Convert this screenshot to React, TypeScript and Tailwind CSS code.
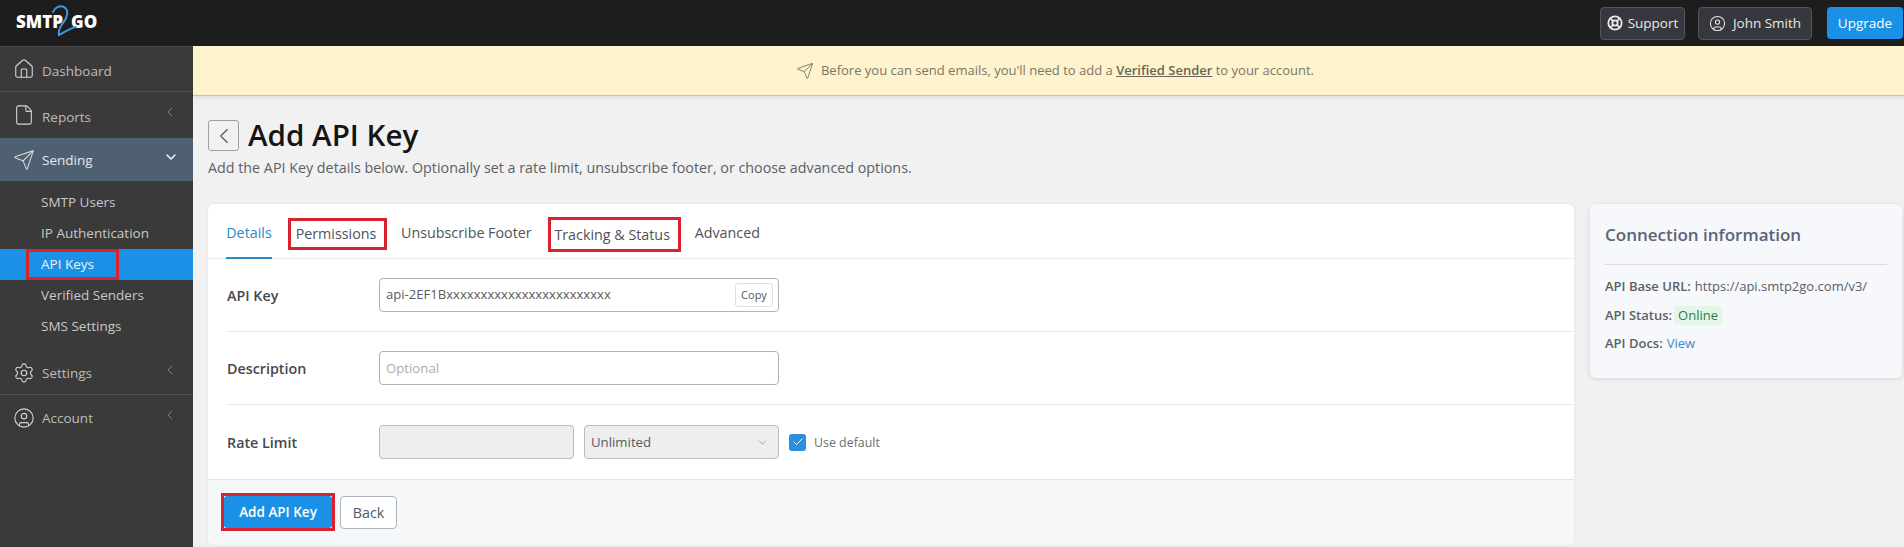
import { Check, ChevronDown, ChevronLeft, CircleUser, File, House, LifeBuoy, Send, Settings } from "lucide-react";

const font = { fontFamily: '"Open Sans", sans-serif' };

const SideItem = ({ icon: Icon, label, chevron, active, low }: { icon: React.ElementType; label: string; chevron?: boolean; active?: boolean; low?: boolean }) => (
  <div className={`flex items-center h-full pl-[13px] pr-[15px] ${active ? "bg-[#4f6073] text-[#e8e8e8]" : "text-[#bdbdbd]"}`}>
    <Icon size={22} strokeWidth={1.2} className="text-[#d4d4d4] shrink-0" />
    <span className={`ml-[7px] text-[13.5px] flex-1 ${low ? "pt-[4px]" : "pt-[1px]"}`}>{label}</span>
    {chevron && <ChevronLeft size={16} strokeWidth={1.25} className="text-[#8f8f8f] -mt-[6px]" />}
    {active && <ChevronDown size={16} strokeWidth={2} className="text-white -mt-[6px] -mr-[1px]" />}
  </div>
);

const subItems = ["SMTP Users", "IP Authentication", "API Keys", "Verified Senders", "SMS Settings"];

const Sidebar = () => (
  <aside className="w-[193px] shrink-0 bg-[#3a3a3a] border-t border-[#4a4a4a]">
    <div className="h-[45px] border-b border-[#4e4e4e]">
      <SideItem icon={House} label="Dashboard" low />
    </div>
    <div className="h-[46px]">
      <SideItem icon={File} label="Reports" chevron low />
    </div>
    <div className="h-[43px]">
      <SideItem icon={Send} label="Sending" active />
    </div>
    <div className="pt-[6px] pb-[10px]">
      {subItems.map((item) => (
        <div key={item} className={`h-[31px] flex items-center text-[13.5px] ${item === "API Keys" ? "bg-[#1a91e6] text-[#f2f2f2]" : "text-[#c8c8c8]"}`}>
          {item === "API Keys" ? (
            <span className="ml-[26px] w-[93px] h-[31px] pl-[12px] flex items-center border-[3px] border-[#d8222f]">{item}</span>
          ) : (
            <span className="ml-[41px]">{item}</span>
          )}
        </div>
      ))}
    </div>
    <div className="h-[43px] border-b border-[#525252]">
      <SideItem icon={Settings} label="Settings" chevron />
    </div>
    <div className="h-[45px]">
      <SideItem icon={CircleUser} label="Account" chevron />
    </div>
  </aside>
);

const Header = () => (
  <header className="h-[46px] shrink-0 bg-[#1d1d1d] flex items-center justify-between pl-[16px] pr-[1px]">
    <div className="relative flex items-center text-white font-extrabold text-[17px] leading-[24px] mb-[2px]">
      <span>SMTP</span>
      <span className="w-[8px]" />
      <span>GO</span>
      <svg viewBox="50 5 30 32" className="absolute left-[34px] -top-[5px] w-[30px] h-[32px]" fill="none" stroke="#3f97e0" strokeWidth="2" strokeLinecap="round">
        <path d="M53 12C55 7 60 5 64 7C69 10 68 17 63 23C60 27 58 31 59 35C63 33 70 28 76 27" />
      </svg>
    </div>
    <div className="flex items-center text-[13.5px] text-[#e8e8e8]">
      <button className="h-[33px] w-[85px] flex items-center justify-center gap-[5px] bg-[#36383d] border border-[#53565c] rounded-[4px]">
        <LifeBuoy size={16} strokeWidth={2.75} />
        Support
      </button>
      <button className="ml-[13px] h-[33px] w-[114px] flex items-center justify-center gap-[7px] bg-[#36383d] border border-[#53565c] rounded-[4px]">
        <CircleUser size={17} strokeWidth={1.5} />
        John Smith
      </button>
      <button className="ml-[15px] h-[32px] w-[76px] bg-[#1a91e6] text-white rounded-[4px]">Upgrade</button>
    </div>
  </header>
);

const Banner = () => (
  <div className="h-[50px] shrink-0 bg-[#fef3cd] border-b border-[#c9c3a8] shadow-[0_2px_4px_rgba(0,0,0,0.08)] flex items-center justify-center gap-[7px] text-[13px] text-[#7b7667] pl-[13px]">
    <Send size={18} strokeWidth={1.2} />
    <span>
      Before you can send emails, you'll need to add a <span className="font-semibold underline text-[#6a6559]">Verified Sender</span> to your account.
    </span>
  </div>
);

const Tabs = () => (
  <div className="h-[55px] border-b border-[#e3edf3] flex items-start pl-[18px] text-[14.3px] text-[#4d5359]">
    <div className="h-[55px] w-[46px] pt-[18px] text-center text-[#2a8cc9] border-b-2 border-[#2a8cc9]">Details</div>
    <div className="ml-[16px] mt-[14px] w-[99px] h-[32px] pr-[3px] flex items-center justify-center outline-[3px] -outline-offset-[3px] outline-[#d8222f]">Permissions</div>
    <div className="ml-[14px] pt-[18px]">Unsubscribe Footer</div>
    <div className="ml-[16px] mt-[13px] w-[133px] h-[35px] pr-[4px] flex items-center justify-center outline-[3px] -outline-offset-[3px] outline-[#d8222f]">Tracking &amp; Status</div>
    <div className="ml-[14px] pt-[18px]">Advanced</div>
  </div>
);

const Row = ({ label, last, children }: { label: string; last?: boolean; children: React.ReactNode }) => (
  <div className={`ml-[19px] flex items-center font-semibold ${last ? "h-[74px]" : "h-[73px] border-b border-[#e6edf0]"}`}>
    <div className="w-[152px] text-[14.3px] text-[#45494e] pt-[1px]">{label}</div>
    {children}
  </div>
);

const Card = () => (
  <section className="flex-1 bg-white rounded-[6px] shadow-[0_0_3px_rgba(0,0,0,0.08)] overflow-hidden">
    <Tabs />
    <Row label="API Key">
      <div className="w-[400px] h-[34px] flex items-center justify-between pl-[6px] pr-[5px] border border-[#aab4bd] rounded-[4px] font-normal text-[13.1px] text-[#555b61]">
        <span>api-2EF1Bxxxxxxxxxxxxxxxxxxxxxxxx</span>
        <span className="h-[24px] w-[38px] flex items-center justify-center border border-[#dde1e5] rounded-[3px] text-[11px] font-medium text-[#50565c]">Copy</span>
      </div>
    </Row>
    <Row label="Description">
      <div className="w-[400px] h-[34px] flex items-center pl-[6px] pt-[1px] border border-[#aab4bd] rounded-[4px] font-normal text-[13.2px] text-[#a9adb1]">Optional</div>
    </Row>
    <Row label="Rate Limit" last>
      <div className="w-[195px] h-[34px] bg-[#eeeeee] border border-[#b4bcc4] rounded-[4px]" />
      <div className="ml-[10px] w-[195px] h-[34px] flex items-center justify-between pl-[6px] pr-[9px] pt-[1px] bg-[#eeeeee] border border-[#b4bcc4] rounded-[4px] font-normal text-[13.2px] text-[#555b61]">
        Unlimited
        <ChevronDown size={13} strokeWidth={1} />
      </div>
      <div className="ml-[10px] w-[17px] h-[17px] bg-[#2a8fdc] rounded-[3px] flex items-center justify-center">
        <Check size={12} strokeWidth={2} className="text-white" />
      </div>
      <span className="ml-[8px] pt-[2px] text-[12.4px] font-normal text-[#6a6f74]">Use default</span>
    </Row>
    <div className="h-[66px] bg-[#f5f7f9] border-t border-[#e1e6ea] pl-[16px] pt-[16px] flex items-start gap-[8px] text-[14.3px]">
      <div className="outline-[3px] outline-[#d8222f]">
        <button className="block w-[108px] h-[32px] bg-[#1a91e6] text-white text-[13.5px] font-semibold rounded-[3px]">Add API Key</button>
      </div>
      <button className="w-[57px] h-[33px] bg-white border border-[#a9b6c0] rounded-[4px] text-[#4f5a63]">Back</button>
    </div>
  </section>
);

const ConnectionInfo = () => (
  <aside className="w-[312px] shrink-0 h-[174px] bg-[#f7f8fb] rounded-[6px] shadow-[0_1px_5px_rgba(0,0,0,0.12)] px-[15px] pt-[18px] text-[13px] text-[#5c6065]">
    <h2 className="text-[17px] font-semibold text-[#5b6478] pb-[16px] border-b border-[#d8dbe0]">Connection information</h2>
    <div className="mt-[11px] h-[22px] flex items-center">
      <b className="font-semibold mr-[4px]">API Base URL:</b> https://api.smtp2go.com/v3/
    </div>
    <div className="mt-[7px] h-[22px] flex items-center">
      <b className="font-semibold mr-[2px]">API Status:</b>
      <span className="px-[4px] h-[19px] flex items-center bg-[#e3f6e8] text-[#2f7d4f] rounded-[3px]">Online</span>
    </div>
    <div className="mt-[6px] h-[22px] flex items-center">
      <b className="font-semibold mr-[4px]">API Docs:</b>
      <span className="text-[#3f8bc9]">View</span>
    </div>
  </aside>
);

export default function App() {
  return (
    <div className="w-full h-[547px] overflow-hidden flex flex-col bg-[#f1f1f1]" style={font}>
      <Header />
      <div className="flex flex-1 min-h-0">
        <Sidebar />
        <main className="flex-1 flex flex-col min-w-0">
          <Banner />
          <div className="pl-[15px] pr-[2px] pt-[24px]">
            <div className="flex items-center h-[31px]">
              <button className="w-[31px] h-[31px] flex items-center justify-center border border-[#9aa0a6] rounded-[3px] text-[#555]">
                <ChevronLeft size={26} strokeWidth={1} />
              </button>
              <h1 className="ml-[9px] -mt-[1px] text-[29.6px] font-semibold text-[#151515] leading-none">Add API Key</h1>
            </div>
            <p className="mt-[7px] text-[14.3px] text-[#5c6065] leading-[19px]">
              Add the API Key details below. Optionally set a rate limit, unsubscribe footer, or choose advanced options.
            </p>
            <div className="mt-[27px] flex items-start gap-[16px]">
              <Card />
              <ConnectionInfo />
            </div>
          </div>
        </main>
      </div>
    </div>
  );
}
